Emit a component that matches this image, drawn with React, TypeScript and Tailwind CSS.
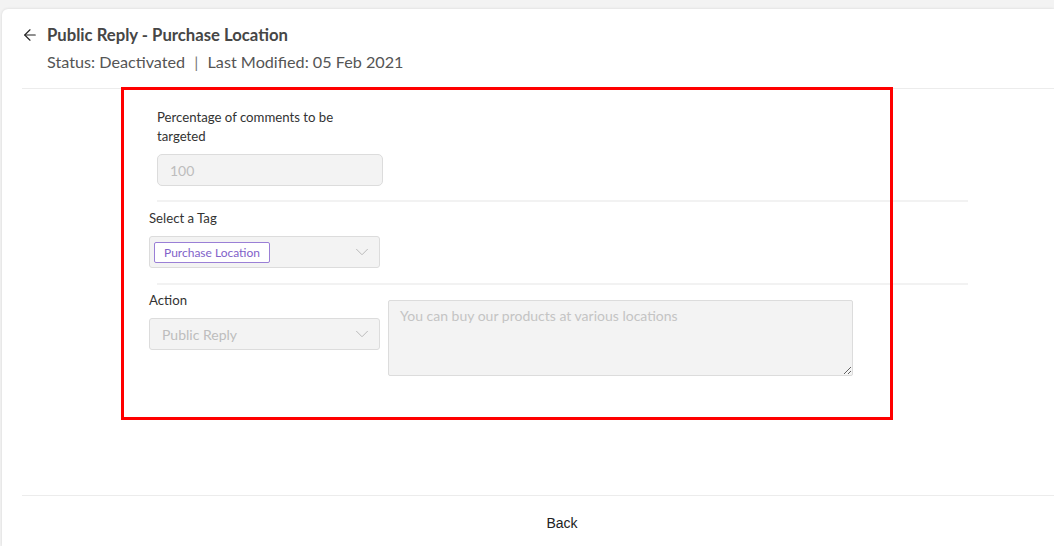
import React from 'react';
import { ArrowLeft, ChevronDown } from 'lucide-react';

const Divider = () => <div className="mr-[-78px] h-[2px] bg-[#f2f2f2]" />;

export default function App() {
  return (
    <div className="h-screen overflow-hidden bg-[#f3f3f3] pl-[2px] pt-[9px] font-['Lato',sans-serif]">
      <div className="flex h-full flex-col rounded-tl-md bg-white shadow-[0_0_3px_rgba(0,0,0,0.12)]">
        {/* header */}
        <div className="ml-[20px] border-b border-[#ececec] pb-[14px] pt-[14px]">
          <div className="flex items-center">
            <ArrowLeft size={18} strokeWidth={1.5} className="-ml-[1px] mr-[8px] text-[#222]" />
            <h1 className="text-[16.7px] font-bold leading-6 text-[#464646]">Public Reply - Purchase Location</h1>
          </div>
          <div className="mt-[3px] pl-[25px] text-[16.2px] leading-6 text-[#555]">
            Status: Deactivated <span className="mx-[5px] text-[#777]">|</span> Last Modified: 05 Feb 2021
          </div>
        </div>

        {/* form, outlined in red */}
        <div className="relative ml-[119px] mt-[-2px] h-[333px] w-[772px] border-[3px] border-transparent text-[13.2px] text-[#333] after:pointer-events-none after:absolute after:-inset-[3px] after:border-[3px] after:border-[#ff0000]">
          <div className="pl-[33px] pt-[18px]">
            <label className="block w-[200px] leading-[19px]">Percentage of comments to be targeted</label>
            <div className="mt-[8px] flex h-8 w-[226px] items-center rounded-[5px] border border-[#dcdcdc] bg-[#f3f3f3] px-[12px] text-[14px] text-[#bdbdbd]">
              100
            </div>
            <div className="mt-[14px]">
              <Divider />
            </div>
          </div>

          <div className="pl-[25px] pt-[7px]">
            <label className="block leading-[19px]">Select a Tag</label>
            <div className="mt-[8px] flex h-8 w-[231px] items-center justify-between rounded-[3px] border border-[#dcdcdc] bg-[#f3f3f3] pl-[4px] pr-[6px]">
              <span className="rounded-[2px] border border-[#9a7fd6] bg-white px-[9px] text-[12px] leading-[19px] text-[#8162c9]">
                Purchase Location
              </span>
              <ChevronDown size={22} strokeWidth={1} className="text-[#b5b5b5]" />
            </div>
          </div>
          <div className="pl-[33px] pt-[15px]">
            <Divider />
          </div>

          <div className="flex pl-[25px] pt-[6px]">
            <div>
              <label className="block leading-[19px]">Action</label>
              <div className="mt-[8px] flex h-8 w-[231px] items-center justify-between rounded-[3px] border border-[#dcdcdc] bg-[#f3f3f3] pl-[12px] pr-[6px] text-[14px] text-[#bdbdbd]">
                <span>Public Reply</span>
                <ChevronDown size={22} strokeWidth={1} className="text-[#b5b5b5]" />
              </div>
            </div>
            <textarea
              readOnly
              placeholder="You can buy our products at various locations"
              className="ml-[8px] mt-[9px] h-[76px] w-[465px] rounded-[2px] border border-[#dcdcdc] bg-[#f3f3f3] px-[11px] pb-[4px] pt-[4px] text-[14px] outline-none placeholder:text-[#c4c4c4]"
            />
          </div>
        </div>

        <div className="flex-1" />

        {/* footer */}
        <div className="ml-[20px] border-t border-[#ececec]">
          <div className="flex h-[50px] items-center justify-center pl-[48px] pt-[4px]">
            <button className="font-['Liberation_Sans',sans-serif] text-[14px] text-[#222]">Back</button>
          </div>
        </div>
      </div>
    </div>
  );
}
